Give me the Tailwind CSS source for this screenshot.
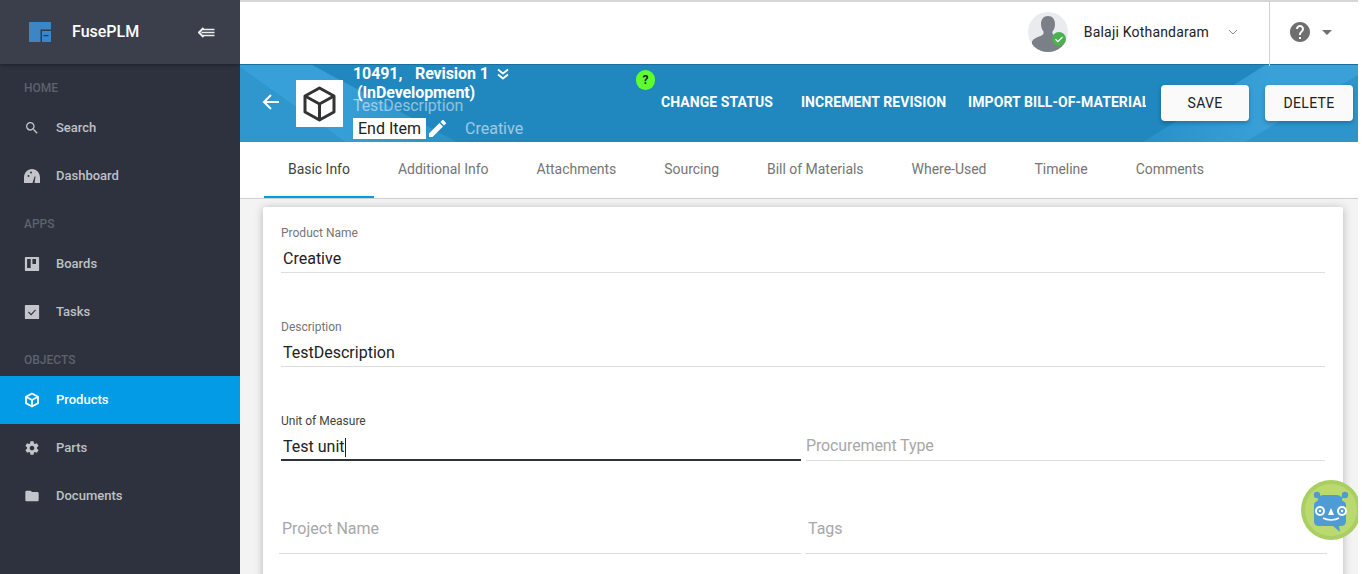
<!DOCTYPE html>
<html lang="en">

<head>
    <meta charset="UTF-8">
    <title>FusePLM</title>
    <script src="https://cdn.jsdelivr.net/npm/@tailwindcss/browser@4"></script>
</head>

<body class="bg-white font-['Roboto',sans-serif] overflow-hidden">
    <div class="relative flex h-[574px] w-[1366px] overflow-hidden">

        <!-- sidebar -->
        <aside class="w-[240px] shrink-0 h-full bg-[#2d323e] text-[13px] font-medium text-[#bfc1c6]">
            <div class="h-[64px] flex items-center bg-[#3a3f4b] shadow-[0_1px_4px_rgba(0,0,0,0.4)] pl-[29px] pr-[25px]">
                <svg width="22" height="20" viewBox="0 0 22 20" class="shrink-0">
                    <rect width="22" height="20" fill="#3d86c6" />
                    <path d="M13 20V9h9V7.500H11.500V20z" fill="#2d3a4c" />
                    <rect x="14.500" y="13" width="5" height="1.200" fill="#22364c" />
                </svg>
                <span class="ml-[21px] text-[16px] text-white">FusePLM</span>
                <svg width="17" height="11" viewBox="0 0 17 11" class="ml-auto" fill="none" stroke="#eceded">
                    <path d="M5.500 1 1 5.500 5.500 10" stroke-width="2" />
                    <path d="M5 2.500h11.500M3.500 5.500h13M5 8.500h11.500" stroke-width="1.600" />
                </svg>
            </div>

            <div class="h-[40px] flex items-center pl-[24px] pt-[8px] text-[12px] text-[#5e626c]">HOME</div>
            <a class="h-[48px] flex items-center pl-[24px]">
                <svg class="w-[16px] h-[16px] mr-[16px]" viewBox="0 0 24 24" fill="#c3c5ca"><path d="M15.500 14h-.79l-.28-.27A6.470 6.470 0 0 0 16 9.500 6.500 6.500 0 1 0 9.500 16c1.610 0 3.090-.59 4.230-1.570l.27.28v.79l5 4.990L20.490 19l-4.990-5zm-6 0C7.010 14 5 11.990 5 9.500S7.010 5 9.500 5 14 7.010 14 9.500 11.990 14 9.500 14z"/></svg>
                Search
            </a>
            <a class="h-[48px] flex items-center pl-[24px]">
                <svg class="w-[16px] h-[16px] mr-[16px]" viewBox="0 0 16 16" fill="#c3c5ca"><path d="M0 15V9.500C0 5 3.500 1 8 1s8 4 8 8.500V15h-5.500l1-6.500-.8-.2L8.500 15z"/><circle cx="4.500" cy="8" r="1" fill="#2d323e"/><circle cx="7" cy="4.500" r="1" fill="#2d323e"/></svg>
                Dashboard
            </a>

            <div class="h-[40px] flex items-center pl-[24px] pt-[8px] text-[12px] text-[#5e626c]">APPS</div>
            <a class="h-[48px] flex items-center pl-[24px]">
                <svg class="w-[16px] h-[16px] mr-[16px]" viewBox="0 0 18 18" fill="#c3c5ca"><path d="M2 1h14a1 1 0 0 1 1 1v14a1 1 0 0 1-1 1H2a1 1 0 0 1-1-1V2a1 1 0 0 1 1-1zm1.500 2.500v10h4v-10zm6 0v5.500h4v-5.500z" fill-rule="evenodd"/></svg>
                Boards
            </a>
            <a class="h-[48px] flex items-center pl-[24px]">
                <svg class="w-[16px] h-[16px] mr-[16px]" viewBox="0 0 18 18" fill="#c3c5ca"><path d="M2 1h14a1 1 0 0 1 1 1v14a1 1 0 0 1-1 1H2a1 1 0 0 1-1-1V2a1 1 0 0 1 1-1z"/><path d="M5 9l3 3 5-5.500" fill="none" stroke="#2d323e" stroke-width="1.200"/></svg>
                Tasks
            </a>

            <div class="h-[40px] flex items-center pl-[24px] pt-[8px] text-[12px] text-[#5e626c]">OBJECTS</div>
            <a class="h-[48px] flex items-center pl-[24px] bg-[#039be5] text-white">
                <svg class="w-[16px] h-[16px] mr-[16px]" viewBox="0 0 16 16" fill="none" stroke="#fff" stroke-width="1.800" stroke-linejoin="round"><path d="M8 1.500 14 4.800v6.400L8 14.500 2 11.200V4.800z"/><path d="M2 4.800 8 8l6-3.200M8 8v6.500"/></svg>
                Products
            </a>
            <a class="h-[48px] flex items-center pl-[24px]">
                <svg class="w-[16px] h-[16px] mr-[16px]" viewBox="0 0 24 24" fill="#c3c5ca"><path d="M19.430 12.980c.04-.32.07-.64.07-.98s-.03-.66-.07-.98l2.110-1.650c.19-.15.24-.42.12-.64l-2-3.460c-.12-.22-.39-.3-.61-.22l-2.490 1c-.52-.4-1.080-.73-1.690-.98l-.38-2.650A.488.488 0 0 0 14 2h-4c-.25 0-.46.18-.49.42l-.38 2.650c-.61.25-1.170.59-1.690.98l-2.490-1c-.23-.09-.49 0-.61.22l-2 3.460c-.13.22-.07.49.12.64l2.110 1.650c-.04.32-.07.65-.07.98s.03.66.07.98l-2.110 1.650c-.19.15-.24.42-.12.64l2 3.460c.12.22.39.3.61.22l2.490-1c.52.4 1.080.73 1.690.98l.38 2.650c.03.24.24.42.49.42h4c.25 0 .46-.18.49-.42l.38-2.650c.61-.25 1.170-.59 1.690-.98l2.490 1c.23.09.49 0 .61-.22l2-3.460c.12-.22.07-.49-.12-.64l-2.110-1.650zM12 15.500c-1.930 0-3.500-1.570-3.500-3.500s1.570-3.500 3.500-3.500 3.500 1.570 3.500 3.500-1.570 3.500-3.500 3.500z"/></svg>
                Parts
            </a>
            <a class="h-[48px] flex items-center pl-[24px]">
                <svg class="w-[16px] h-[16px] mr-[16px]" viewBox="0 0 24 24" fill="#c3c5ca"><path d="M10 4H4c-1.100 0-2 .9-2 2v12c0 1.100.9 2 2 2h16c1.100 0 2-.9 2-2V8c0-1.100-.9-2-2-2h-8l-2-2z"/></svg>
                Documents
            </a>
        </aside>

        <!-- content -->
        <div class="w-[1118px] shrink-0 h-full flex flex-col bg-[#f3f3f3]">

            <!-- toolbar -->
            <header class="h-[64px] shrink-0 bg-white shadow-[inset_0_2px_0_#d6d6d6] flex items-center justify-end relative z-10">
                <div class="relative w-[40px] h-[40px] rounded-full bg-[#e9ebee] overflow-hidden">
                    <svg viewBox="0 0 40 40" class="w-full h-full" fill="#7b8088"><path d="M20 4c4.500 0 7 3.500 7 8 0 3-.8 5.500-2.500 7.500-.5 2 .5 3.500 3 4.500 4 1.500 7 2.500 8.500 5.500V40H4V29.500c1.500-3 4.500-4 8.500-5.500 2.500-1 3.500-2.500 3-4.500C14 17.500 13 15 13 12c0-4.500 2.500-8 7-8z"/></svg>
                </div>
                <svg viewBox="0 0 14 14" class="absolute left-[812px] top-[32px] w-[14px] h-[14px]"><circle cx="7" cy="7" r="7" fill="#4caf50"/><path d="M3.500 7.300l2.400 2.300 4.600-4.600" fill="none" stroke="#fff" stroke-width="1.200"/></svg>
                <span class="ml-[16px] text-[14px] tracking-[0.2px] text-[#212121]">Balaji Kothandaram</span>
                <svg width="10" height="6" viewBox="0 0 10 6" class="ml-[19px]"><path d="M1 1l4 4 4-4" fill="none" stroke="#8a8a8a" stroke-width="1"/></svg>
                <div class="ml-[31px] w-[89px] h-[66px] self-start border-l border-l-[#d2d2d2] flex items-center pl-[20px] pb-[2px]">
                    <svg width="20" height="20" viewBox="2 2 20 20" fill="#6f6f6f"><path d="M12 2C6.480 2 2 6.480 2 12s4.480 10 10 10 10-4.480 10-10S17.520 2 12 2zm1 17h-2v-2h2v2zm2.070-7.750l-.9.920C13.450 12.900 13 13.500 13 15h-2v-.5c0-1.100.45-2.100 1.170-2.830l1.240-1.260c.37-.36.59-.86.59-1.410 0-1.100-.9-2-2-2s-2 .9-2 2H8c0-2.210 1.790-4 4-4s4 1.790 4 4c0 .88-.36 1.680-.93 2.250z"/></svg>
                    <svg width="10" height="5" viewBox="0 0 10 5" class="ml-[12px]" fill="#6f6f6f"><path d="M0 0h10L5 5z"/></svg>
                </div>
            </header>

            <!-- blue item header -->
            <div class="h-[78px] shrink-0 relative overflow-hidden bg-[#2087bf] text-white">
                <!-- diagonal sheen -->
                <svg class="absolute inset-0" width="1118" height="78" viewBox="0 0 1118 78">
                    <defs>
                        <linearGradient id="sheenLeft" x1="1" y1="0" x2="0" y2="0">
                            <stop offset="0" stop-color="#2a90c8" />
                            <stop offset="0.6" stop-color="#38a0d8" />
                        </linearGradient>
                        <linearGradient id="sheenRight" x1="0" y1="0" x2="1" y2="0">
                            <stop offset="0" stop-color="#2890c8" />
                            <stop offset="0.6" stop-color="#3aa0d8" />
                        </linearGradient>
                    </defs>
                    <path d="M0 0h70L217 78H0z" fill="url(#sheenLeft)" />
                    <path d="M0 3 106 78H0z" fill="#2f96ce" />
                    <path d="M903 78 1027 0h91v78z" fill="url(#sheenRight)" />
                    <path d="M1005 78 1118 11v67z" fill="#2d95cc" />
                </svg>
                <div class="absolute left-0 top-0 w-full h-[1px] bg-[#1b6f9c]"></div>

                <svg class="absolute left-[22px] top-[29px]" width="18" height="18" viewBox="0 0 18 18" fill="none" stroke="#fff" stroke-width="2"><path d="M17 9H2M9 2 2 9l7 7"/></svg>

                <div class="absolute left-[56px] top-[16px] w-[47px] h-[47px] bg-white flex items-center justify-center">
                    <svg width="35" height="36" viewBox="0 0 35 36" fill="none" stroke="#333" stroke-width="3" stroke-linejoin="round"><path d="M17.500 2 32 10v16l-14.500 8L3 26V10z"/><path d="M3 10l14.500 8L32 10M17.500 18v16"/></svg>
                </div>

                <div class="absolute left-[113px] top-0 w-[170px] text-[16px] leading-[19px] font-bold tracking-[-0.1px]">
                    <div class="h-[19px] whitespace-nowrap flex items-center">10491,&nbsp;&nbsp; <span class="ml-[5px]">Revision 1</span>
                        <svg class="ml-[8px]" width="12" height="12" viewBox="0 0 12 12" fill="none" stroke="#fff" stroke-width="1.800"><path d="M1 1.500l5 4 5-4M1 6.500l5 4 5-4"/></svg>
                    </div>
                    <div class="pl-[4px]">(InDevelopment)</div>
                </div>
                <div class="absolute left-[113px] top-[30px] text-[16px] tracking-[-0.1px] text-white/50">TestDescription</div>

                <div class="absolute left-[113px] top-[54px] h-[21px] w-[73px] bg-white text-[#212121] text-[16px] leading-[21px] text-center">End Item</div>
                <svg class="absolute left-[189px] top-[56px]" width="17" height="17" viewBox="3 3 18 18" fill="#fff"><path d="M3 17.250V21h3.750L17.810 9.940l-3.750-3.750L3 17.250zM20.710 7.040a1 1 0 0 0 0-1.410l-2.340-2.340a1 1 0 0 0-1.410 0l-1.830 1.830 3.750 3.750 1.830-1.830z"/></svg>
                <div class="absolute left-[225px] top-[53px] text-[16px] text-white/55">Creative</div>

                <div class="absolute left-[396px] top-[6px] w-[19px] h-[20px] rounded-full bg-[#5fff2f] text-[#1a1a1a] text-[12px] font-bold leading-[20px] text-center">?</div>

                <!-- actions -->
                <div class="absolute left-[421px] top-[28px] h-[20px] flex text-[14px] font-bold tracking-[0.07px] leading-[20px]">
                    <span class="whitespace-nowrap">CHANGE STATUS</span>
                    <span class="whitespace-nowrap ml-[28px]">INCREMENT REVISION</span>
                    <span class="whitespace-nowrap ml-[22px] w-[178px] overflow-hidden">IMPORT BILL-OF-MATERIALS</span>
                </div>
                <button class="absolute left-[921px] top-[21px] w-[88px] h-[36px] rounded bg-[#fafafa] text-[#212121] text-[14px] tracking-[0.3px] shadow-[0_2px_4px_rgba(0,0,0,0.25)]">SAVE</button>
                <button class="absolute left-[1025px] top-[21px] w-[88px] h-[36px] rounded bg-[#fafafa] text-[#212121] text-[14px] tracking-[0.3px] shadow-[0_2px_4px_rgba(0,0,0,0.25)]">DELETE</button>
            </div>

            <!-- tabs -->
            <nav class="h-[57px] shrink-0 bg-white border-b border-b-[#cfcfcf] flex items-start pl-[24px] text-[14px] tracking-[-0.025px] text-[#757575]">
                <a class="h-[56px] px-[24px] flex items-center border-b-2 border-b-[#039be5] text-[#424242]">Basic Info</a>
                <a class="h-[56px] px-[24px] pb-[2px] flex items-center">Additional Info</a>
                <a class="h-[56px] px-[24px] pb-[2px] flex items-center">Attachments</a>
                <a class="h-[56px] px-[24px] pb-[2px] flex items-center">Sourcing</a>
                <a class="h-[56px] px-[24px] pb-[2px] flex items-center">Bill of Materials</a>
                <a class="h-[56px] px-[24px] pb-[2px] flex items-center">Where-Used</a>
                <a class="h-[56px] px-[24px] pb-[2px] flex items-center">Timeline</a>
                <a class="h-[56px] px-[24px] pb-[2px] flex items-center">Comments</a>
            </nav>

            <!-- form card -->
            <div class="flex-1 overflow-hidden pl-[23px] pt-[8px] pr-[15px]">
                <div class="h-[400px] bg-white rounded-[2px] shadow-[0_1px_8px_rgba(0,0,0,0.25)] px-[18px] text-[16px] text-[#212121]">
                    <div class="pt-[19px] h-[94px]">
                        <div class="text-[12px] leading-[14px] text-[#757575]">Product Name</div>
                        <div class="mt-[7px] h-[26px] pl-[2px] leading-[24px] border-b border-b-[#dedede]">Creative</div>
                    </div>
                    <div class="pt-[19px] h-[94px]">
                        <div class="text-[12px] leading-[14px] text-[#757575]">Description</div>
                        <div class="mt-[7px] h-[26px] pl-[2px] leading-[24px] border-b border-b-[#dedede]">TestDescription</div>
                    </div>
                    <div class="flex gap-[5px] h-[94px]">
                        <div class="w-[520px] pt-[19px]">
                            <div class="text-[12px] leading-[14px] text-[#424242]">Unit of Measure</div>
                            <div class="mt-[7px] h-[26px] pl-[2px] leading-[24px] border-b-2 border-b-[#2d323e] flex items-start">Test unit<span class="inline-block w-[1px] h-[19px] mt-[3px] bg-[#212121]"></span></div>
                        </div>
                        <div class="flex-1 mt-[39px] h-[27px] leading-[24px] tracking-[-0.13px] text-[#a8a8a8] border-b border-b-[#dedede]">Procurement Type</div>
                    </div>
                    <div class="flex gap-[4px] -mx-[2px]">
                        <div class="w-[522px] mt-[28px] h-[37px] pl-[3px] leading-[24px] text-[#a8a8a8] border-b border-b-[#dedede]">Project Name</div>
                        <div class="flex-1 mt-[28px] h-[37px] pl-[3px] leading-[24px] text-[#a8a8a8] border-b border-b-[#dedede]">Tags</div>
                    </div>
                </div>
            </div>
        </div>

        <!-- white strip at the right edge, covers the chat bubble -->
        <div class="relative z-20 w-[8px] shrink-0 bg-white"></div>

        <!-- chat bot bubble -->
        <svg class="absolute z-10 left-[1301px] top-[480px]" width="60" height="60" viewBox="0 0 60 60">
            <circle cx="30" cy="30" r="30" fill="#a9cf62" />
            <circle cx="30" cy="30" r="26" fill="#bcd96f" />
            <circle cx="16" cy="15" r="3.200" fill="#4f9bd3" />
            <circle cx="44" cy="15" r="3.200" fill="#4f9bd3" />
            <path d="M16 15l6 5M44 15l-6 5" stroke="#4f9bd3" stroke-width="2" />
            <path d="M22 15h14c3 0 5 2 5.500 6 2 .5 3.500 2 3.500 4v16c0 3-2 5-5 5h-2l1 6-7-6H18c-3 0-5-2-5-5V25c0-2 1.500-3.500 3.500-4 .5-4 2.500-6 5.500-6z" fill="#4f9bd3" />
            <circle cx="19" cy="31" r="5" fill="#fff" /><circle cx="19" cy="31" r="3" fill="#4f9bd3" /><circle cx="19" cy="31" r="1.300" fill="#fff" />
            <circle cx="41" cy="31" r="5" fill="#fff" /><circle cx="41" cy="31" r="3" fill="#4f9bd3" /><circle cx="41" cy="31" r="1.300" fill="#fff" />
            <path d="M30 28l3 7h-6z" fill="#fff" />
            <path d="M22 38c4 2.500 12 2.500 16 0" fill="none" stroke="#fff" stroke-width="1.500" />
        </svg>
    </div>
</body>

</html>
